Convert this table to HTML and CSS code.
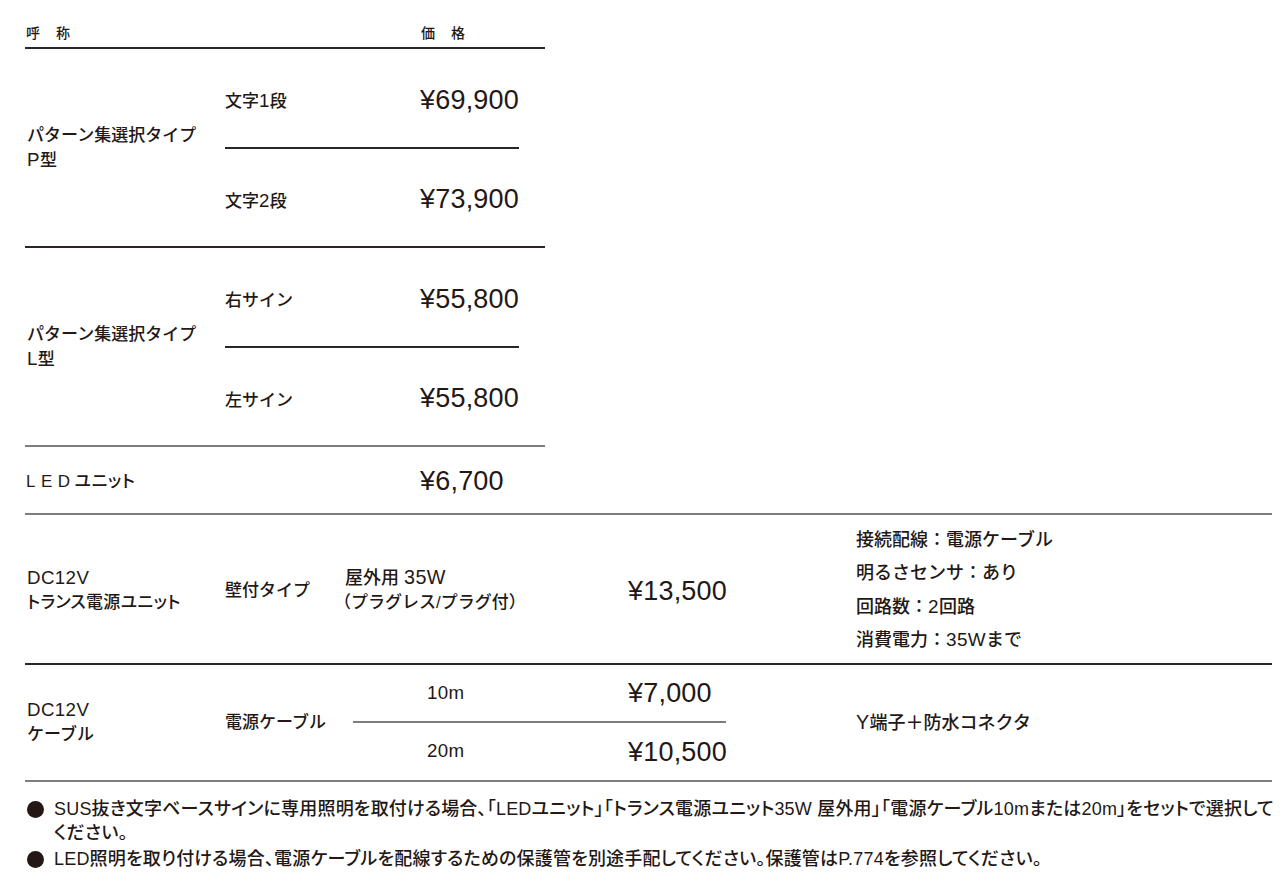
FILE: index.html
```html
<!DOCTYPE html>
<html lang="ja">
<head>
<meta charset="utf-8">
<title>価格表</title>
<link rel="stylesheet" href="styles.css">
</head>
<body>
<div class="page">
  <div class="top">
    <div class="thead">
      <span class="th-name">呼　称</span>
      <span class="th-price">価　格</span>
    </div>

    <div class="group line-dark">
      <div class="label">パターン集選択タイプ<br><span class="en">P</span>型</div>
      <div class="subs">
        <div class="sub sub-first line-dark">
          <span class="sub-name">文字<span class="en">1</span>段</span>
          <span class="price">¥69,900</span>
        </div>
        <div class="sub">
          <span class="sub-name">文字<span class="en">2</span>段</span>
          <span class="price">¥73,900</span>
        </div>
      </div>
    </div>

    <div class="group line-gray">
      <div class="label">パターン集選択タイプ<br><span class="en">L</span>型</div>
      <div class="subs">
        <div class="sub sub-first line-dark">
          <span class="sub-name">右サイン</span>
          <span class="price">¥55,800</span>
        </div>
        <div class="sub">
          <span class="sub-name">左サイン</span>
          <span class="price">¥55,800</span>
        </div>
      </div>
    </div>

    <div class="led-row">
      <span class="label led-label"><span class="led">LED</span>ユニット</span>
      <span class="price">¥6,700</span>
    </div>
  </div>

  <div class="bottom">
    <div class="row-trans line-dark">
      <div class="label"><span class="en">DC12V</span><br><span class="tight">トランス電源ユニット</span></div>
      <div class="cell">壁付タイプ</div>
      <div class="cell spec">屋外用 <span class="en">35W</span><br><span class="paren">（プラグレス/プラグ付）</span></div>
      <div class="price">¥13,500</div>
      <ul class="notes">
        <li>接続配線：電源ケーブル</li>
        <li>明るさセンサ：あり</li>
        <li>回路数：<span class="en">2</span>回路</li>
        <li>消費電力：<span class="en">35W</span>まで</li>
      </ul>
    </div>

    <div class="row-cable line-gray">
      <div class="label"><span class="en">DC12V</span><br>ケーブル</div>
      <div class="cell">電源ケーブル</div>
      <div class="cable-subs">
        <div class="csub csub-first">
          <span class="len en">10m</span>
          <span class="price">¥7,000</span>
        </div>
        <div class="csub">
          <span class="len en">20m</span>
          <span class="price">¥10,500</span>
        </div>
      </div>
      <div class="spacer"></div>
      <div class="cell conn"><span class="en">Y</span>端子＋防水コネクタ</div>
    </div>
  </div>

  <div class="footnotes">
    <p class="note"><span class="dot"></span><span class="note-text">SUS抜き文字ベースサインに専用照明を取付ける場合、「LEDユニット」「トランス電源ユニット35W 屋外用」「電源ケーブル10mまたは20m」をセットで選択してください。</span></p>
    <p class="note"><span class="dot"></span><span class="note-text">LED照明を取り付ける場合、電源ケーブルを配線するための保護管を別途手配してください。保護管はP.774を参照してください。</span></p>
  </div>
</div>
</body>
</html>
```

FILE: styles.css
```css
* { box-sizing: border-box; }

html, body {
  margin: 0;
  padding: 0;
  background: #ffffff;
}

body {
  font-family: "Liberation Sans", "Noto Sans CJK JP", sans-serif;
  color: #231815;
  font-size: 17px;
  font-weight: 500;
}

.en {
  font-size: 1.1em;
  letter-spacing: 0.4px;
  line-height: 1;
}

.page {
  padding: 0 12px 0 25px;
}

.line-dark { border-bottom: 2px solid #2a2625; }
.line-gray { border-bottom: 2px solid #7d7d7d; }

/* ---------- top table ---------- */
.top {
  width: 520px;
}

.thead {
  display: grid;
  grid-template-columns: 395px 1fr;
  align-items: end;
  height: 49px;
  padding-bottom: 5px;
  border-bottom: 2px solid #2a2625;
  font-size: 14px;
  letter-spacing: 1px;
}

.th-name { padding-left: 1px; }
.th-price { padding-left: 1px; }

.group {
  display: grid;
  grid-template-columns: 200px 1fr;
  align-items: center;
}

.label {
  padding-left: 2px;
  line-height: 25px;
}

.subs {
  padding-right: 26px;
}

.sub {
  display: grid;
  grid-template-columns: 195px 1fr;
  align-items: center;
  height: 97px;
  padding-top: 3px;
}

.sub-first {
  height: 100px;
}

.price {
  font-size: 27px;
  line-height: 30px;
  font-weight: 400;
  letter-spacing: 0.2px;
}

.led-row {
  display: grid;
  grid-template-columns: 395px 1fr;
  align-items: center;
  height: 66px;
  padding-top: 2px;
}

.led-label {
  padding-left: 1px;
  font-feature-settings: "palt";
  letter-spacing: 0.5px;
}

.led {
  letter-spacing: 5.5px;
  margin-right: -1px;
}

/* ---------- bottom table ---------- */
.bottom {
  border-top: 2px solid #7d7d7d;
  width: 1247px;
}

.row-trans {
  display: grid;
  grid-template-columns: 200px 120px 283px 228px 1fr;
  align-items: center;
  height: 150px;
  padding-top: 3px;
}

.cell {
  line-height: 24px;
}

.row-trans .label,
.row-cable .label {
  line-height: 24px;
}

.tight {
  font-feature-settings: "palt";
  letter-spacing: 0.3px;
}

.spec {
  font-size: 18px;
}

.spec .paren {
  margin-left: -11px;
  font-size: 17px;
}

.notes {
  list-style: none;
  margin: 0;
  padding: 0;
  line-height: 33.4px;
  font-size: 18px;
}

.notes .en {
  font-size: 1.05em;
}

.row-cable {
  display: grid;
  grid-template-columns: 200px 128px 373px 130px 1fr;
  align-items: center;
  height: 117px;
}

.cable-subs {
  align-self: stretch;
  display: flex;
  flex-direction: column;
}

.csub {
  display: grid;
  grid-template-columns: 275px 1fr;
  align-items: center;
  flex: 1;
}

.csub-first {
  border-bottom: 2px solid #7d7d7d;
  flex: 0 0 58px;
}

.len {
  padding-left: 74px;
}

.conn {
  font-size: 18px;
}

/* ---------- footnotes ---------- */
.footnotes {
  padding-top: 15px;
}

.note {
  display: flex;
  align-items: flex-start;
  margin: 0 0 2px;
  line-height: 24px;
}

.dot {
  flex: 0 0 auto;
  width: 17px;
  height: 17px;
  margin: 4px 10px 0 2px;
  border-radius: 50%;
  background: #231815;
}

.note-text {
  flex: 0 0 1226px;
  font-size: 18px;
  font-feature-settings: "palt";
  letter-spacing: 0.2px;
}
```
